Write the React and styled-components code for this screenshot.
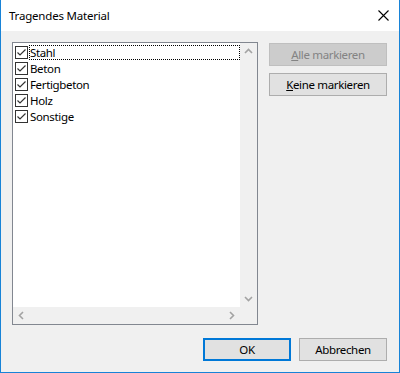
import styled, { createGlobalStyle } from "styled-components";

const GlobalStyle = createGlobalStyle`
  html, body {
    margin: 0;
    padding: 0;
    background: #f0f0f0;
  }
  body {
    font-family: "Noto Sans", "Open Sans", sans-serif;
    font-size: 11.5px;
    color: #000;
  }
`;

const items = ["Stahl", "Beton", "Fertigbeton", "Holz", "Sonstige"];

const Window = styled.div`
  width: 400px;
  height: 373px;
  box-sizing: border-box;
  border: 1px solid #1883d7;
  border-top: none;
  background: #f0f0f0;
  display: flex;
  flex-direction: column;
`;

const TitleBar = styled.div`
  height: 31px;
  background: #fff;
  display: flex;
  align-items: center;
  justify-content: space-between;
  padding: 0 0 0 8px;
  font-size: 11.5px;
  letter-spacing: -0.2px;
  flex-shrink: 0;
`;

const CloseBox = styled.div`
  width: 31px;
  height: 31px;
  display: flex;
  align-items: center;
  justify-content: center;
`;

const Body = styled.div`
  flex: 1;
  display: flex;
  flex-direction: column;
  padding: 11px 12px 11px 11px;
`;

const TopRow = styled.div`
  display: flex;
  gap: 11px;
`;

const ListBox = styled.div`
  width: 246px;
  height: 283px;
  box-sizing: border-box;
  border: 1px solid #828790;
  background: #fff;
  display: grid;
  grid-template-columns: 1fr 17px;
  grid-template-rows: 1fr 17px;
`;

const ListItems = styled.div`
  display: flex;
  flex-direction: column;
  padding-top: 1px;
`;

const Row = styled.div`
  height: 16px;
  display: flex;
  align-items: center;
  padding-left: 2px;
`;

const Check = styled.span`
  width: 13px;
  height: 13px;
  box-sizing: border-box;
  border: 1px solid #333;
  background: #fff;
  display: inline-flex;
  align-items: center;
  justify-content: center;
  flex-shrink: 0;
`;

const Label = styled.span`
  flex: 1;
  height: 15px;
  line-height: 13px;
  box-sizing: border-box;
  margin-left: 1px;
  border: 1px dotted ${(p) => (p.$focus ? "#000" : "transparent")};
  letter-spacing: -0.35px;
`;

const ScrollV = styled.div`
  background: #f0f0f0;
  display: flex;
  flex-direction: column;
  justify-content: space-between;
  align-items: center;
  padding: 4px 0;
`;

const ScrollH = styled.div`
  background: #f0f0f0;
  display: flex;
  justify-content: space-between;
  align-items: center;
  padding: 0 4px;
`;

const Corner = styled.div`
  background: #f0f0f0;
`;

const ButtonCol = styled.div`
  display: flex;
  flex-direction: column;
  gap: 7px;
  padding-top: 1px;
`;

const Button = styled.div`
  width: ${(p) => p.$w || 118}px;
  height: 23px;
  box-sizing: border-box;
  border: ${(p) =>
    p.$default ? "2px solid #0078d7" : p.$disabled ? "1px solid #bfbfbf" : "1px solid #adadad"};
  background: ${(p) => (p.$disabled ? "#cccccc" : "#e1e1e1")};
  color: ${(p) => (p.$disabled ? "#838383" : "#000")};
  display: flex;
  align-items: center;
  justify-content: center;
  font-size: 11.5px;
  letter-spacing: -0.35px;
  padding-bottom: 1px;
`;

const Mnemonic = styled.span`
  text-decoration: underline;
`;

const BottomRow = styled.div`
  margin-top: auto;
  display: flex;
  justify-content: flex-end;
  gap: 8px;
`;

const Chevron = ({ dir }) => {
  const paths = {
    up: "M1 6 L4.5 2.5 L8 6",
    down: "M1 3 L4.5 6.5 L8 3",
    left: "M6 1 L2.5 4.5 L6 8",
    right: "M3 1 L6.5 4.5 L3 8",
  };
  return (
    <svg width="9" height="9" viewBox="0 0 9 9">
      <path d={paths[dir]} fill="none" stroke="#a3a3a3" strokeWidth="1.6" />
    </svg>
  );
};

const CheckMark = () => (
  <svg width="11" height="11" viewBox="0 0 11 11">
    <path d="M1.5 5.5 L4 8 L9.5 2.5" fill="none" stroke="#333" strokeWidth="1.2" />
  </svg>
);

export default function App() {
  return (
    <>
      <GlobalStyle />
      <Window>
        <TitleBar>
          <span>Tragendes Material</span>
          <CloseBox>
            <svg width="11" height="11" viewBox="0 0 11 11">
              <path d="M0.5 0.5 L10.5 10.5 M10.5 0.5 L0.5 10.5" stroke="#000" strokeWidth="1.1" />
            </svg>
          </CloseBox>
        </TitleBar>
        <Body>
          <TopRow>
            <ListBox>
              <ListItems>
                {items.map((it, i) => (
                  <Row key={it}>
                    <Check>
                      <CheckMark />
                    </Check>
                    <Label $focus={i === 0}>{it}</Label>
                  </Row>
                ))}
              </ListItems>
              <ScrollV>
                <Chevron dir="up" />
                <Chevron dir="down" />
              </ScrollV>
              <ScrollH>
                <Chevron dir="left" />
                <Chevron dir="right" />
              </ScrollH>
              <Corner />
            </ListBox>
            <ButtonCol>
              <Button $disabled>
                <span>
                  <Mnemonic>A</Mnemonic>lle markieren
                </span>
              </Button>
              <Button>
                <span>
                  <Mnemonic>K</Mnemonic>eine markieren
                </span>
              </Button>
            </ButtonCol>
          </TopRow>
          <BottomRow>
            <Button $default $w={88}>OK</Button>
            <Button $w={88}>Abbrechen</Button>
          </BottomRow>
        </Body>
      </Window>
    </>
  );
}
